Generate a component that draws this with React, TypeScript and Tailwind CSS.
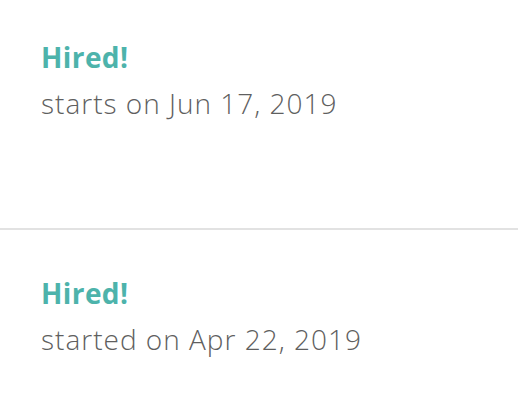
export default function App() {
  const font = { fontFamily: '"Open Sans", sans-serif' };
  return (
    <div className="w-[518px] h-[404px] bg-white overflow-hidden" style={font}>
      <div className="pl-[41px] pt-[34px] pb-[102px]">
        <div className="text-[28px] leading-[46px] font-bold tracking-[0.4px] text-[#4db3ab]">Hired!</div>
        <div className="text-[28px] leading-[46px] font-light tracking-[1px] text-[#5f5f5f]">starts on Jun 17, 2019</div>
      </div>
      <div className="h-[2px] bg-[#e2e2e2]" />
      <div className="pl-[41px] pt-[40px]">
        <div className="text-[28px] leading-[46px] font-bold tracking-[0.4px] text-[#4db3ab]">Hired!</div>
        <div className="text-[28px] leading-[46px] font-light tracking-[1px] text-[#5f5f5f]">started on Apr 22, 2019</div>
      </div>
    </div>
  );
}
